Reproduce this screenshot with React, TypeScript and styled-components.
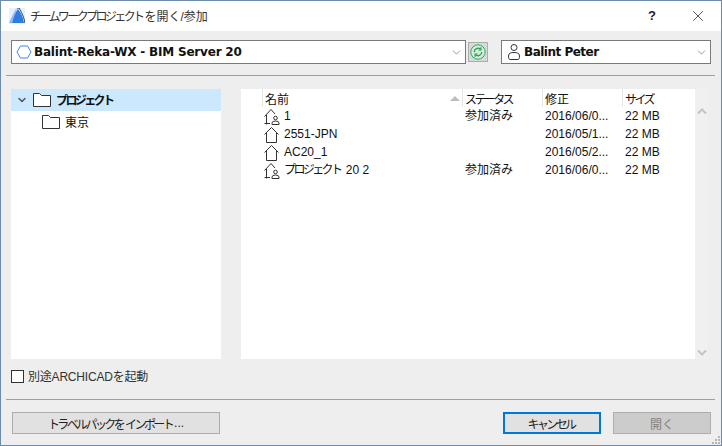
import React from 'react';
import styled, { createGlobalStyle } from 'styled-components';
import { ChevronDown, X } from 'lucide-react';

const GlobalStyle = createGlobalStyle`
  html, body {
    margin: 0;
    padding: 0;
    background: #eeeeee;
  }
  * {
    box-sizing: border-box;
  }
`;

const Window = styled.div`
  width: 722px;
  height: 446px;
  display: flex;
  flex-direction: column;
  border: 1px solid #6b8cae;
  border-top: none;
  background: #eeeeee;
  color: #111;
  font-family: "Liberation Sans", "Noto Sans CJK JP", sans-serif;
  font-size: 12px;
  position: relative;
  overflow: hidden;
`;

// katakana in the original font is much narrower than in Noto
const Kana = styled.span`
  letter-spacing: -2.6px;
  margin-right: 2px;
`;

const TitleBar = styled.div`
  height: 31px;
  flex: none;
  display: flex;
  align-items: center;
  background: #fff;
  border-top: 1px solid #6b8cae;
  padding: 0 0 1px 8px;
`;

const Title = styled.div`
  margin-left: 5px;
  padding-bottom: 1px;
  flex: 1;
  color: #333;
  font-size: 12px;
`;

const TitleButton = styled.div`
  width: 46px;
  display: flex;
  justify-content: center;
  align-items: center;
  font-size: 13px;
  font-weight: bold;
  color: #222;
`;

const TopRow = styled.div`
  display: flex;
  align-items: center;
  height: 24px;
  margin: 9px 10px 0 10px;
`;

const Combo = styled.div<{ $w: number }>`
  width: ${(p) => p.$w}px;
  height: 24px;
  display: flex;
  align-items: center;
  gap: 2px;
  padding: 0 2px 0 4px;
  background: #fff;
  border: 1px solid #7a7a7a;
  font-family: "DejaVu Sans", "Noto Sans CJK JP", sans-serif;
  font-weight: bold;
  font-size: 12px;
`;

const ComboText = styled.span<{ $spacing: number }>`
  flex: 1;
  white-space: nowrap;
  letter-spacing: ${(p) => p.$spacing}px;
`;

const RefreshButton = styled.div`
  width: 20px;
  height: 20px;
  margin-left: 2px;
  margin-right: 13px;
  display: flex;
  align-items: center;
  justify-content: center;
  background: #d9d9d9;
  border: 1px solid #adadad;
`;

const Divider = styled.div`
  height: 1px;
  flex: none;
  background: #a0a0a0;
  margin: 0 6px 0 5px;
`;

const TopDivider = styled(Divider)`
  margin-top: 11px;
`;

const Panels = styled.div`
  display: flex;
  height: 270px;
  margin: 13px 0 0 10px;
`;

const Tree = styled.div`
  width: 210px;
  background: #fff;
  margin-right: 20px;
`;

const TreeRow = styled.div<{ $selected?: boolean; $indent: number }>`
  height: 22px;
  display: flex;
  align-items: center;
  padding-left: ${(p) => p.$indent}px;
  background: ${(p) => (p.$selected ? '#cce8ff' : 'transparent')};
  font-weight: ${(p) => (p.$selected ? 'bold' : 'normal')};
  gap: 5px;
`;

const TreeLabel = styled.span`
  margin-top: -2px;
`;

const ListArea = styled.div`
  width: 467px;
  display: flex;
`;

const List = styled.div`
  width: 454px;
  background: #fff;
`;

const HeaderRow = styled.div`
  display: grid;
  grid-template-columns: 21px 200px 80px 80px 71px;
  height: 18px;
  width: 452px;
`;

const HeaderCell = styled.div`
  display: flex;
  align-items: center;
  justify-content: space-between;
  padding: 1px 0 0 2px;
  border-left: 1px solid #e5e5e5;
  white-space: nowrap;
  height: 18px;
  &:first-child {
    border-left: none;
  }
`;

const SortArrow = styled.span`
  width: 0;
  height: 0;
  margin: 0 2px 0 0;
  border-left: 5px solid transparent;
  border-right: 5px solid transparent;
  border-bottom: 5px solid #bdbdbd;
`;

const Row = styled.div`
  display: grid;
  grid-template-columns: 21px 200px 80px 80px 71px;
  height: 18px;
  align-items: center;
  white-space: nowrap;
  line-height: 16px;
`;

const NameCell = styled.div`
  grid-column: 2;
  display: flex;
  align-items: center;
  gap: 4px;
  margin-left: 2px;
`;

const TextCell = styled.div`
  padding-left: 3px;
  overflow: hidden;
`;

const ScrollTrack = styled.div`
  width: 13px;
  display: flex;
  flex-direction: column;
  justify-content: space-between;
  align-items: center;
  padding: 19px 0 3px;
  background: #f0f0f0;
`;

const CheckRow = styled.label`
  display: flex;
  align-items: center;
  gap: 4px;
  margin: 11px 0 0 10px;
  height: 13px;
  color: #333;
  letter-spacing: -0.2px;
`;

const CheckBox = styled.span`
  width: 13px;
  height: 13px;
  background: #fff;
  border: 1px solid #333;
`;

const CheckLabel = styled.span`
  margin-top: -2px;
`;

const BottomDivider = styled(Divider)`
  margin-top: 16px;
`;

const Footer = styled.div`
  display: flex;
  margin: 12px 0 0 11px;
  height: 22px;
`;

const Button = styled.div<{ $w: number; $kind?: 'default' | 'disabled' }>`
  width: ${(p) => p.$w}px;
  height: 22px;
  display: flex;
  align-items: center;
  justify-content: center;
  background: ${(p) => (p.$kind === 'disabled' ? '#cccccc' : '#e1e1e1')};
  border: ${(p) => (p.$kind === 'default' ? '2px solid #0078d7' : '1px solid #adadad')};
  color: ${(p) => (p.$kind === 'disabled' ? '#838383' : '#222')};
  margin-right: ${(p) => (p.$kind === 'disabled' ? '10px' : '0')};
  margin-left: ${(p) => (p.$kind === 'disabled' ? '12px' : '0')};
`;

const Spacer = styled.div`
  flex: 1;
`;

const Grip = styled.svg`
  position: absolute;
  right: 1px;
  bottom: 1px;
`;

const IconBox = styled.svg`
  flex: none;
`;

const AppLogo = () => (
  <IconBox width="16" height="16" viewBox="0 0 16 16">
    <rect x="0" y="0" width="16" height="16" fill="#e8f0fa" />
    <path d="M0 15 C3 9 5 3 8 0 L3 15 Z" fill="#8db9ef" />
    <path d="M3 15 C5 8 7 3 9 1 C11 3 14 9 15 15 Z" fill="#2f7de0" />
    <path d="M8 0 H10 C12 3 15 9 16 15" fill="none" stroke="#1f3f78" strokeWidth="1" />
  </IconBox>
);

const Hexagon = () => (
  <IconBox width="16" height="16" viewBox="0 0 16 16">
    <path d="M1 8 L4.5 2 H11.5 L15 8 L11.5 14 H4.5 Z" fill="none" stroke="#3f87e6" strokeWidth="1" />
  </IconBox>
);

const RefreshIcon = () => (
  <IconBox width="16" height="16" viewBox="0 0 16 16">
    <circle cx="8" cy="8" r="7.2" fill="#d9ead9" stroke="#22b060" strokeWidth="1" />
    <path d="M4.2 8 A3.8 3.8 0 0 1 10.5 5.2 M11.8 8 A3.8 3.8 0 0 1 5.5 10.8" fill="none" stroke="#22a055" strokeWidth="1.3" />
    <path d="M10.9 3.2 V6 H8.4 M5.1 12.8 V10 H7.6" fill="none" stroke="#22a055" strokeWidth="1.2" />
  </IconBox>
);

const UserIcon = () => (
  <IconBox width="16" height="18" viewBox="0 0 16 18">
    <circle cx="8" cy="4.5" r="3" fill="none" stroke="#333" />
    <path d="M4 16.5 C3 16.5 2.5 15.5 2.5 13 C2.5 10 5 9.5 8 9.5 C11 9.5 13.5 10 13.5 13 C13.5 15.5 13 16.5 12 16.5 Z" fill="none" stroke="#333" />
  </IconBox>
);

const FolderIcon = () => (
  <IconBox width="18" height="14" viewBox="0 0 18 14">
    <path d="M0.5 13.5 V0.5 H6.5 L8.5 2.5 H17.5 V13.5 Z" fill="#fff" stroke="#333" />
  </IconBox>
);

const HouseIcon = ({ shared }: { shared?: boolean }) => (
  <IconBox width="16" height="17" viewBox="0 0 16 17">
    {shared ? (
      <>
        <path d="M0.5 8.5 L7 1.5 L11 6 M2.5 7 V16.5 M0.5 15.5 H6" fill="none" stroke="#333" />
        <circle cx="11.5" cy="10" r="1.8" fill="none" stroke="#333" />
        <path d="M8 16.5 V15 Q8 13 11.5 13 Q15 13 15 15 V16.5 Z" fill="none" stroke="#333" />
      </>
    ) : (
      <path d="M0.5 8.5 L7.5 1.5 L14.5 8.5 M2.5 7 V16.5 H12.5 V7" fill="none" stroke="#333" />
    )}
  </IconBox>
);

const projects = [
  { key: 'a', name: <>1</>, shared: true, status: '参加済み', date: '2016/06/0...' },
  { key: 'b', name: <>2551-JPN</>, shared: false, status: '', date: '2016/05/1...' },
  { key: 'c', name: <>AC20_1</>, shared: false, status: '', date: '2016/05/2...' },
  { key: 'd', name: <><Kana>プロジェクト</Kana> 20 2</>, shared: true, status: '参加済み', date: '2016/06/0...' },
];

const App: React.FC = () => {
  return (
    <Window>
      <GlobalStyle />
      <TitleBar>
        <AppLogo />
        <Title><Kana>チームワークプロジェクト</Kana>を開く/参加</Title>
        <TitleButton>?</TitleButton>
        <TitleButton>
          <X size={18} strokeWidth={1} />
        </TitleButton>
      </TitleBar>
      <TopRow>
        <Combo $w={455}>
          <Hexagon />
          <ComboText $spacing={-0.2}>Balint-Reka-WX - BIM Server 20</ComboText>
          <ChevronDown size={13} strokeWidth={1} color="#444" />
        </Combo>
        <RefreshButton>
          <RefreshIcon />
        </RefreshButton>
        <Combo $w={210}>
          <UserIcon />
          <ComboText $spacing={-0.5}>Balint Peter</ComboText>
          <ChevronDown size={13} strokeWidth={1} color="#444" />
        </Combo>
      </TopRow>
      <TopDivider />
      <Panels>
        <Tree>
          <TreeRow $selected $indent={5}>
            <ChevronDown size={12} strokeWidth={3} color="#555" />
            <FolderIcon />
            <TreeLabel><Kana>プロジェクト</Kana></TreeLabel>
          </TreeRow>
          <TreeRow $indent={31}>
            <FolderIcon />
            <TreeLabel>東京</TreeLabel>
          </TreeRow>
        </Tree>
        <ListArea>
          <List>
            <HeaderRow>
              <HeaderCell />
              <HeaderCell>
                名前
                <SortArrow />
              </HeaderCell>
              <HeaderCell><Kana>ステータス</Kana></HeaderCell>
              <HeaderCell>修正</HeaderCell>
              <HeaderCell><Kana>サイズ</Kana></HeaderCell>
            </HeaderRow>
            {projects.map((p) => (
              <Row key={p.key}>
                <NameCell>
                  <HouseIcon shared={p.shared} />
                  <span>{p.name}</span>
                </NameCell>
                <TextCell>{p.status}</TextCell>
                <TextCell>{p.date}</TextCell>
                <TextCell>22 MB</TextCell>
              </Row>
            ))}
          </List>
          <ScrollTrack>
            <svg width="10" height="7" viewBox="0 0 10 7">
              <path d="M1 5.5 L5 1.5 L9 5.5" fill="none" stroke="#c4c4c4" strokeWidth="2" />
            </svg>
            <svg width="10" height="7" viewBox="0 0 10 7">
              <path d="M1 1.5 L5 5.5 L9 1.5" fill="none" stroke="#c4c4c4" strokeWidth="2" />
            </svg>
          </ScrollTrack>
        </ListArea>
      </Panels>
      <CheckRow>
        <CheckBox />
        <CheckLabel>別途ARCHICADを起動</CheckLabel>
      </CheckRow>
      <BottomDivider />
      <Footer>
        <Button $w={208}><Kana>トラベルパックを</Kana><Kana>インポート</Kana>...</Button>
        <Spacer />
        <Button $w={98} $kind="default"><Kana>キャンセル</Kana></Button>
        <Button $w={98} $kind="disabled">開く</Button>
      </Footer>
      <Grip width="8" height="8" viewBox="0 0 8 8">
        <path d="M6 0h2v2H6zM3 3h2v2H3zM6 3h2v2H6zM0 6h2v2H0zM3 6h2v2H3zM6 6h2v2H6z" fill="#b5b5b5" />
      </Grip>
    </Window>
  );
};

export default App;
